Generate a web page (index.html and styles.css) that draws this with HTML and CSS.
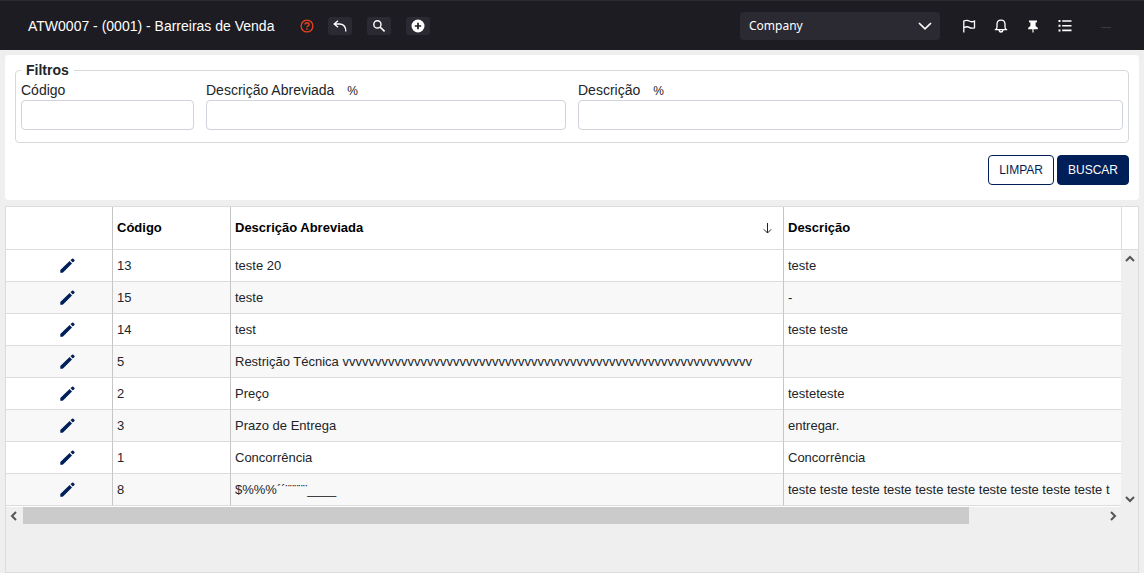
FILE: index.html
```html
<!DOCTYPE html>
<html lang="pt-BR">
<head>
<meta charset="utf-8">
<title>Barreiras de Venda</title>
<link rel="stylesheet" href="styles.css">
</head>
<body>
<svg class="defs" aria-hidden="true">
  <symbol id="pencil" viewBox="0 0 15 15"><path d="M.3 14.7V11.9L9.6 3 12 5.4 3 14.4Q2.6 14.7 2 14.7Z M10.5 2.2 12 .7Q12.6.1 13.3.7L14.4 1.8Q15 2.4 14.4 3L12.9 4.6Z" fill="#001e57"/></symbol>
</svg>
<header class="topbar">
  <h1 class="title">ATW0007 - (0001) - Barreiras de Venda</h1>
  <a class="help" href="#" aria-label="Ajuda"><svg viewBox="0 0 14 14" width="14" height="14" fill="none" stroke="#e8431f" stroke-width="1.3"><circle cx="7" cy="7" r="5.9"/><path d="M5 5.6Q5 3.7 7 3.7T9 5.4Q9 6.3 8 6.8T7 8.3M7 9.3V10.7" stroke-width="1.5"/></svg></a>
  <div class="tools">
    <button class="tool" aria-label="Voltar"><svg viewBox="0 0 14 14" width="14" height="14" fill="none" stroke="#fff" stroke-width="1.3"><path d="M5 1.8 1.2 5 5 8.2M1.4 5H7Q12.8 5.5 12.8 12.4"/></svg></button>
    <button class="tool" aria-label="Pesquisar"><svg viewBox="0 0 14 14" width="14" height="14" fill="none" stroke="#fff" stroke-width="1.4"><circle cx="5.4" cy="5.4" r="3.6"/><path d="m8 8 4.6 4.4" stroke-width="1.6"/></svg></button>
    <button class="tool" aria-label="Adicionar"><svg viewBox="0 0 14 14" width="14" height="14"><circle cx="7" cy="7" r="6.5" fill="#fff"/><path d="M7 3.8V10.2M3.8 7H10.2" stroke="#1d1c22" stroke-width="1.7"/></svg></button>
  </div>
  <div class="company">
    <select aria-label="Empresa"><option>Company</option></select>
    <svg class="chevron" viewBox="0 0 14 8" width="14" height="8" fill="none" stroke="#fff" stroke-width="1.7"><path d="m1 1 6 5.8L13 1"/></svg>
  </div>
  <nav class="actions">
    <button class="action" aria-label="Marcar"><svg viewBox="0 0 14 14" width="14" height="14" fill="none" stroke="#fff" stroke-width="1.3"><path d="M1.8 13.5V1.5M1.8 2Q5 .6 7.2 2T12.5 2.1V8.8Q9.4 9.8 7.2 8.4T1.8 8.7"/></svg></button>
    <button class="action" aria-label="Notificações"><svg viewBox="0 0 14 14" width="14" height="14" fill="none" stroke="#fff" stroke-width="1.3"><path d="M.8 10.6H13.2M2 10.5Q3 9.5 3 7.5V5.3Q3 1.2 7 1.2T11 5.3V7.5Q11 9.5 12 10.5M5 11Q5.4 13 7 13T9 11"/></svg></button>
    <button class="action" aria-label="Fixar"><svg viewBox="0 0 14 14" width="14" height="14"><path d="M3 1.5H11V3.2L9.6 3.6V7L11.8 8.8V10.2H7.6V13.4H6.4V10.2H2.2V8.8L4.4 7V3.6L3 3.2Z" fill="#fff"/></svg></button>
    <button class="action" aria-label="Lista"><svg viewBox="0 0 14 14" width="14" height="14" stroke="#fff" stroke-width="1.6"><path d="M.5 2H2.5M.5 6.7H2.5M.5 11.4H2.5" stroke-width="2"/><path d="M4.2 2H13.5M4.2 6.7H13.5M4.2 11.4H13.5"/></svg></button>
    <span class="dash"></span>
  </nav>
</header>
<main class="page">
  <form class="panel">
    <fieldset class="filters">
      <legend>Filtros</legend>
      <div class="field"><label for="codigo">Código</label><input id="codigo" type="text"></div>
      <div class="field"><label for="abrev">Descrição Abreviada <span class="pct">%</span></label><input id="abrev" type="text"></div>
      <div class="field"><label for="desc">Descrição <span class="pct">%</span></label><input id="desc" type="text"></div>
    </fieldset>
    <div class="buttons">
      <button type="reset" class="btn">LIMPAR</button>
      <button type="button" class="btn primary">BUSCAR</button>
    </div>
  </form>
  <section class="grid">
    <div class="view">
      <table>
        <colgroup><col class="c-edit"><col class="c-code"><col class="c-abbr"><col class="c-desc"></colgroup>
        <thead><tr><th></th><th>Código</th><th><div class="sorted">Descrição Abreviada<svg viewBox="0 0 9 11" width="9" height="11" fill="none" stroke="#222"><path d="M4.5 0V10M.8 6.3 4.5 10 8.2 6.3"/></svg></div></th><th>Descrição</th></tr></thead>
        <tbody>
          <tr><td><button class="edit" aria-label="Editar"><svg><use href="#pencil"/></svg></button></td><td>13</td><td>teste 20</td><td>teste</td></tr>
          <tr><td><button class="edit" aria-label="Editar"><svg><use href="#pencil"/></svg></button></td><td>15</td><td>teste</td><td>-</td></tr>
          <tr><td><button class="edit" aria-label="Editar"><svg><use href="#pencil"/></svg></button></td><td>14</td><td>test</td><td>teste teste</td></tr>
          <tr><td><button class="edit" aria-label="Editar"><svg><use href="#pencil"/></svg></button></td><td>5</td><td>Restrição Técnica vvvvvvvvvvvvvvvvvvvvvvvvvvvvvvvvvvvvvvvvvvvvvvvvvvvvvvvvvvvvvvv</td><td></td></tr>
          <tr><td><button class="edit" aria-label="Editar"><svg><use href="#pencil"/></svg></button></td><td>2</td><td>Preço</td><td>testeteste</td></tr>
          <tr><td><button class="edit" aria-label="Editar"><svg><use href="#pencil"/></svg></button></td><td>3</td><td>Prazo de Entrega</td><td>entregar.</td></tr>
          <tr><td><button class="edit" aria-label="Editar"><svg><use href="#pencil"/></svg></button></td><td>1</td><td>Concorrência</td><td>Concorrência</td></tr>
          <tr><td><button class="edit" aria-label="Editar"><svg><use href="#pencil"/></svg></button></td><td>8</td><td>$%%%´´¨¨¨¨¨____</td><td>teste teste teste teste teste teste teste teste teste teste t</td></tr>
        </tbody>
      </table>
    </div>
    <div class="side">
      <div class="side-head"></div>
      <div class="vbar">
        <svg viewBox="0 0 10 7" width="10" height="7"><path d="m1 6 4-4 4 4"/></svg>
        <svg viewBox="0 0 10 7" width="10" height="7"><path d="m1 1 4 4 4-4"/></svg>
      </div>
    </div>
    <div class="hbar">
      <svg viewBox="0 0 7 10" width="7" height="10"><path d="M6 1 2 5l4 4"/></svg>
      <div class="track"><div class="thumb"></div></div>
      <svg viewBox="0 0 7 10" width="7" height="10"><path d="m1 1 4 4-4 4"/></svg>
    </div>
  </section>
</main>
</body>
</html>
```
FILE: styles.css
```css
* { box-sizing: border-box; }
body {
  margin: 0;
  min-height: 100vh;
  display: flex;
  flex-direction: column;
  background: #efefef;
  color: #212529;
  font: 14px/20px "Liberation Sans", Arial, sans-serif;
}
button, input, select { font: inherit; margin: 0; }
svg { display: block; }
.defs { display: none; }

.topbar {
  display: flex;
  align-items: center;
  height: 50px;
  padding: 0 32px 0 28px;
  background: #1d1c22;
  border-top: 1px solid #29292f;
  color: #fff;
}
.title { margin: 0; font-size: 14px; font-weight: 400; white-space: nowrap; }
.help { margin-left: 26px; }
.tools { display: flex; gap: 15px; margin-left: 14px; }
.tool {
  display: flex;
  align-items: center;
  justify-content: center;
  width: 24px;
  height: 18px;
  padding: 0;
  border: 0;
  border-radius: 3px;
  background: #2b2a32;
}
.company { display: grid; align-items: center; width: 200px; margin-left: auto; }
.company > * { grid-area: 1 / 1; }
.company select {
  appearance: none;
  height: 28px;
  padding: 0 9px;
  border: 0;
  border-radius: 4px;
  background: #2b2a32;
  color: #fff;
  font: 12px "Noto Sans", sans-serif;
}
.chevron { justify-self: end; margin-right: 8px; pointer-events: none; }
.actions { display: flex; align-items: center; gap: 18px; margin-left: 22px; }
.action { padding: 0; border: 0; background: none; }
.dash { width: 10px; height: 1px; margin: 4px 1px 0 11px; background: #403a36; }

.page { flex: 1; display: flex; flex-direction: column; gap: 6px; padding: 5px 5px 0; }
.panel { padding: 5px 10px 15px; border-radius: 4px; background: #fff; }
.filters {
  display: grid;
  grid-template-columns: 173fr 360fr 545fr;
  gap: 12px;
  margin: 0;
  padding: 0 5px 12px;
  border: 1px solid #d6d8da;
  border-radius: 4px;
}
.filters legend { padding: 0 5px; font-weight: 700; }
.field { min-width: 0; }
.field label { display: block; }
.pct { margin-left: 9px; font-size: 12px; line-height: 12px; }
.field input {
  display: block;
  width: 100%;
  height: 30px;
  padding: 0 8px;
  border: 1px solid #ced4da;
  border-radius: 4px;
  background: #fff;
}
.buttons { display: flex; justify-content: flex-end; gap: 3px; margin-top: 12px; }
.btn {
  height: 30px;
  padding: 0 10px;
  border: 1px solid #001e57;
  border-radius: 4px;
  background: #fff;
  color: #001e57;
  font-size: 12px;
}
.primary { background: #001e57; color: #fff; }

.grid {
  flex: 1;
  display: grid;
  grid-template-columns: minmax(0, 1fr) 17px;
  grid-template-rows: auto 1fr;
  border: 1px solid #dcdcdc;
}
.view { overflow: hidden; border-bottom: 1px solid #fff; }
table {
  width: 1277px;
  table-layout: fixed;
  border-collapse: separate;
  border-spacing: 0;
  background: #fff;
  font-size: 13px;
}
.c-edit { width: 107px; }
.c-code { width: 118px; }
.c-abbr { width: 553px; }
th, td {
  padding: 0 4px;
  border-right: 1px solid #c6c6c6;
  border-bottom: 1px solid #dcdcdc;
  text-align: left;
  white-space: nowrap;
}
th { height: 43px; color: #000; }
td { height: 32px; }
tbody tr:nth-child(even) { background: #f8f8f8; }
.sorted { display: flex; align-items: center; justify-content: space-between; padding-right: 7px; }
.edit { display: block; margin-left: 50px; padding: 0; border: 0; background: none; }
.edit svg { width: 15px; height: 15px; }
.side { display: flex; flex-direction: column; }
.side-head { height: 43px; background: #fff; border-left: 1px solid #dcdcdc; border-bottom: 1px solid #dcdcdc; }
.vbar {
  flex: 1;
  display: flex;
  flex-direction: column;
  align-items: center;
  justify-content: space-between;
  padding: 5px 0 4px;
}
.hbar {
  display: flex;
  align-items: center;
  gap: 6px;
  height: 17px;
  padding: 0 4px;
}
.hbar svg, .vbar svg { fill: none; stroke: #555; stroke-width: 2; }
.track { flex: 1; height: 17px; }
.thumb { width: 87.5%; height: 17px; background: #cbcbcb; }
```
